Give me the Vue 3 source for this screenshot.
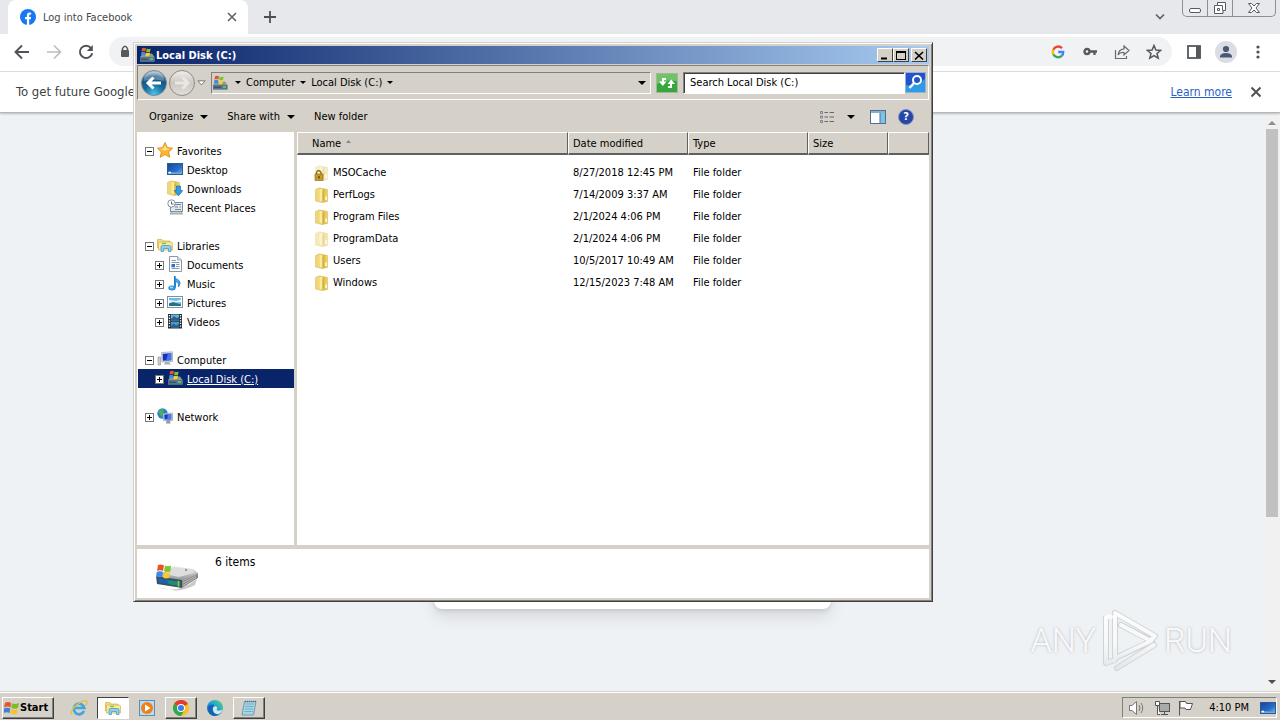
<template>
  <div class="desktop">

    <!-- ICON SPRITES -->
    <svg class="sprites" aria-hidden="true">
      <defs>
        <linearGradient id="g-folder" x1="0" x2="1" y1="0" y2="0">
          <stop offset="0" stop-color="#f8e68c" />
          <stop offset=".5" stop-color="#dfbd45" />
          <stop offset="1" stop-color="#f0d870" />
        </linearGradient>
        <radialGradient id="g-back" cx=".5" cy=".95" r=".9">
          <stop offset="0" stop-color="#48c8f0" />
          <stop offset=".45" stop-color="#176c9e" />
          <stop offset=".8" stop-color="#14507c" />
          <stop offset="1" stop-color="#a9c4d4" />
        </radialGradient>
        <linearGradient id="g-fwd" x1="0" x2="0" y1="0" y2="1">
          <stop offset="0" stop-color="#f0eeeb" />
          <stop offset=".5" stop-color="#cbc8c4" />
          <stop offset="1" stop-color="#e2dfdb" />
        </linearGradient>
        <linearGradient id="g-screen" x1="0" x2="1" y1="0" y2="1">
          <stop offset="0" stop-color="#0f479f" />
          <stop offset=".6" stop-color="#2a6cc4" />
          <stop offset="1" stop-color="#7fc0f0" />
        </linearGradient>
        <linearGradient id="g-drive" x1="0" x2="0" y1="0" y2="1">
          <stop offset="0" stop-color="#f1f1f1" />
          <stop offset="1" stop-color="#8d9192" />
        </linearGradient>
        <linearGradient id="g-edge" x1="0" x2="1" y1="1" y2="0">
          <stop offset="0" stop-color="#0c59a4" />
          <stop offset=".5" stop-color="#1b9de2" />
          <stop offset="1" stop-color="#5fd86a" />
        </linearGradient>
        <linearGradient id="g-mark" x1="0" x2="0" y1="0" y2="1">
          <stop offset="0" stop-color="#fcfdfd" />
          <stop offset=".55" stop-color="#f6f8f9" />
          <stop offset="1" stop-color="#e4e7ea" />
        </linearGradient>
      </defs>

      <symbol id="i-flag" viewBox="0 0 16 16">
        <path d="M1 3Q4 1 7 3L6.500 7.500Q3.500 5.500 0 7.500Z" fill="#e8532a" />
        <path d="M8 3.300Q11 5 15 3L14 8Q10.500 9.500 7.300 7.800Z" fill="#7cba2c" />
        <path d="M0 8.500Q3 6.800 6.300 8.500L5.500 13Q3 11.500-.5 13Z" fill="#3a82d8" />
        <path d="M7.200 9Q10 10.500 13.800 9L13 13.500Q10 15 6.400 13.300Z" fill="#f8c22c" />
      </symbol>

      <symbol id="i-disk" viewBox="0 0 16 16">
        <path d="M1 10L4 6.500H13L15.500 10V14.500H1Z" fill="#8f9a8c" />
        <path d="M1 10H15.500V14.500H1Z" fill="#56758c" />
        <path d="M2 12.300H9" stroke="#2a4a70" />
        <path d="M11 12H14" stroke="#58e050" stroke-width="1.500" />
        <path d="M3 1.300Q5 .3 7 1.300L6.500 4.600Q4.500 3.600 2.500 4.600Z" fill="#e8532a" />
        <path d="M7.700 1.500Q9.500 2.500 11.600 1.500L11 5Q9 5.800 7.200 4.800Z" fill="#7cc82c" />
        <path d="M2.400 5.200Q4.300 4.200 6.300 5.200L5.800 8.400Q4 7.500 2 8.400Z" fill="#3a8ae8" />
        <path d="M7 5.500Q9 6.500 11 5.500L10.400 8.800Q8.500 9.800 6.500 8.700Z" fill="#fbd02c" />
      </symbol>

      <symbol id="i-bigdisk" viewBox="0 0 44 28">
        <path d="M3 24Q22 32 42 16L40 22Q27 29 16 27Z" fill="#c9c9c9" />
        <path d="M2 13L18 3L38 6L43 10L27 18Z" fill="url(#g-drive)" />
        <path d="M18 4L36 6.500L40 9.500L24 14L10 11Z" fill="#dedede" />
        <path d="M27 18L43 10V15L27 25Z" fill="#8b8b8b" />
        <path d="M1 13L27 17V25L2 21Z" fill="#3a5168" />
        <path d="M3 15.500L22 18.500V22.500L4 19.500Z" fill="#1b62b0" />
        <path d="M12 17L22 18.500V22.500L14 21.300Z" fill="#218b72" />
        <path d="M23.500 18V23.500" stroke="#61dc47" stroke-width="2" />
        <path d="M28 20L41 12.500M28 22.500L41 14.500" stroke="#bbb" />
        <circle cx="31" cy="7" r="1.200" fill="#999" />
        <path d="M3 2Q6 1 9 2.500L8 8Q5 6.500 2 8Z" fill="#e8532a" />
        <path d="M10 2.500Q13 4 16 2.500L15.500 8.500Q12 9.500 9 8Z" fill="#7cc82c" />
        <path d="M1.800 9Q5 7.500 8 9L7 14Q4 13 1 14Z" fill="#3a8ae8" />
        <path d="M9 9.300Q12 10.500 15 9.500L14 15Q11 16 8 14.500Z" fill="#fbc82c" />
      </symbol>

      <symbol id="i-folder" viewBox="0 0 16 16">
        <path d="M1.500 2.500L5.500 .8V13L8.500 15.500L1.500 14Z" fill="#efd873" stroke="#d3b54e" stroke-width=".5" />
        <path d="M6 1L13.500 2.500V14.500L8 15.500Z" fill="url(#g-folder)" stroke="#cdae43" stroke-width=".5" />
        <path d="M5.500 1.500V13L8.500 15.200V3Z" fill="#fbeb9d" />
        <path d="M9 3.500V14.500" stroke="#c09a2b" stroke-width=".8" />
        <path d="M12 9.500V13" stroke="#fff" stroke-width="1.400" />
      </symbol>

      <symbol id="i-folder-lock" viewBox="0 0 16 16">
        <use href="#i-folder" opacity=".4" />
        <path d="M2.500 10V7.500Q4.500 3.500 7 7.500V10" fill="none" stroke="#8d762a" stroke-width="1.500" />
        <rect x="1" y="9" width="8" height="6.500" fill="#c79a22" stroke="#8a6712" stroke-width=".6" />
        <path d="M5 11V13.500" stroke="#5b4206" stroke-width="1.300" />
      </symbol>

      <symbol id="i-folder-faint" viewBox="0 0 16 16">
        <use href="#i-folder" opacity=".5" />
      </symbol>

      <symbol id="i-star" viewBox="0 0 16 16">
        <path d="M8 .5L10.300 5.500L15.600 6.200L11.700 9.900L12.800 15.300L8 12.500L3.200 15.300L4.300 9.900L.4 6.200L5.700 5.500Z" fill="#fdb72e" stroke="#df8415" stroke-width=".8" />
        <path d="M8 3L9.500 6.500L13 7L8 8.500L3 7L6.500 6.500Z" fill="#fee18a" />
      </symbol>

      <symbol id="i-desktop" viewBox="0 0 16 16">
        <rect x=".5" y="2.500" width="15" height="11" fill="url(#g-screen)" stroke="#2b5a94" />
        <path d="M1 11L15 12V13H1Z" fill="#74a9df" />
        <path d="M1.500 11.500H4" stroke="#fff" stroke-width="1.500" />
      </symbol>

      <symbol id="i-downloads" viewBox="0 0 16 16">
        <use href="#i-folder" x="-1" />
        <path d="M9.500 6H13.500V10.500H15.800L11.500 15.800L7.200 10.500H9.500Z" fill="#2d9be6" stroke="#1b6db5" stroke-width=".7" />
      </symbol>

      <symbol id="i-recent" viewBox="0 0 16 16">
        <rect x="3.500" y="3.500" width="12" height="9" fill="#e4ebf0" stroke="#7d8f9b" />
        <path d="M3 15L5 12.500H14L15.500 15Z" fill="#c6cdd2" stroke="#7b848a" stroke-width=".7" />
        <path d="M8 5.500H14M8 8H11M12.500 8H14M8 10.500H14" stroke="#6c8797" />
        <circle cx="4.500" cy="4.500" r="3.700" fill="#fff" stroke="#8193a0" />
        <path d="M4.500 2.500V5H6.500" fill="none" stroke="#567" />
      </symbol>

      <symbol id="i-library" viewBox="0 0 16 16">
        <path d="M.5 2.500H5L6 4H13V11H.5Z" fill="#f6df83" stroke="#cfae48" stroke-width=".7" />
        <path d="M1.500 5H14.500L15.500 6V13H1.500Z" fill="#f9ea9c" stroke="#d1b250" stroke-width=".7" />
        <path d="M4 14.500V10Q4 8.500 5.500 8.500H12.500Q14 8.500 14 10V14.500H11.500V11.500H6.500V14.500Z" fill="#8fd0f2" stroke="#4091bb" stroke-width=".7" />
        <path d="M5 6.500H9" stroke="#78bf55" stroke-width="1.300" />
      </symbol>

      <symbol id="i-doc" viewBox="0 0 16 16">
        <path d="M2.500 .5H10.500L14.500 4V15.500H2.500Z" fill="#fdfdfd" stroke="#8696a5" />
        <path d="M10.500 .5V4H14.500" fill="#d4dde5" stroke="#8696a5" stroke-width=".7" />
        <path d="M4.500 4.500H9M4.500 6.500H12.500M9 8.500H12.500M9 10.500H12.500M4.500 12.500H12.500" stroke="#8a9cac" />
        <rect x="4.500" y="8" width="3.500" height="3.300" fill="#2a74c4" />
      </symbol>

      <symbol id="i-music" viewBox="0 0 16 16">
        <path d="M7 1Q8.500 4 12 5.500Q14.500 8 11.500 12Q12.500 7.500 8.500 6.500V12.500" fill="#46aeea" stroke="#1c7cc6" stroke-width=".8" />
        <path d="M7 1H8.500V13H7Z" fill="#1c7cc6" />
        <ellipse cx="5" cy="13" rx="3.700" ry="2.500" fill="#2c92dc" />
        <ellipse cx="4.500" cy="12.500" rx="1.700" ry="1" fill="#9bdcff" />
      </symbol>

      <symbol id="i-picture" viewBox="0 0 16 16">
        <rect x=".5" y="2.500" width="15" height="11" fill="#fff" stroke="#8090a0" />
        <rect x="2" y="4" width="12" height="8" fill="#6ebbe8" />
        <path d="M2 6L9 7L14 5.500V8L2 9Z" fill="#e5f6fa" />
        <path d="M2 9.500L6 8L14 10.500V12H2Z" fill="#257084" />
      </symbol>

      <symbol id="i-video" viewBox="0 0 16 16">
        <rect x="1" y="1" width="14" height="14.500" fill="#252d35" />
        <rect x="4" y="1.500" width="8" height="6.300" fill="#6dafd8" />
        <rect x="4" y="8.700" width="8" height="6.300" fill="#4b99c9" />
        <path d="M4 6L7 3L10 5L12 4V7.800H4ZM4 13L6.500 10.500L9 12.500L12 11V15H4Z" fill="#28618f" />
        <path d="M2.500 2V15M13.500 2V15" stroke="#fff" stroke-width="1.300" stroke-dasharray="1.300 1.300" />
      </symbol>

      <symbol id="i-computer" viewBox="0 0 16 16">
        <path d="M1 6H3.500V14H1Z" fill="#c9ced3" stroke="#878e96" stroke-width=".6" />
        <path d="M4.500 1.500L15.500 .8V10.500L5 11Z" fill="#e1e4e8" stroke="#8b949e" stroke-width=".6" />
        <path d="M5.700 2.700L14.300 2.200V9.200L5.900 9.700Z" fill="#1432bd" />
        <path d="M11 2.500L14.300 2.200V9.200L9 9.500Z" fill="#4670ec" />
        <path d="M8 11H12L14 13.500H7Z" fill="#a8aeb5" />
      </symbol>

      <symbol id="i-network" viewBox="0 0 16 16">
        <circle cx="5.500" cy="5.500" r="5.200" fill="#2b83c8" />
        <path d="M1 4Q4 -.5 7 1.500Q5 4 7 5L4 9Q3 5.500 1 4Z" fill="#49ae62" />
        <path d="M6 5.500L15.500 5V12.500H6.500Z" fill="#dfe3e8" stroke="#89929c" stroke-width=".6" />
        <path d="M7.200 6.600L14.300 6.200V11.500H7.500Z" fill="#1637c6" />
        <path d="M11 6.400L14.300 6.200V11.500H10Z" fill="#4c7af0" />
        <path d="M9.500 12.500H13L13.500 15.500H9Z" fill="#8f979f" />
      </symbol>
    </svg>

    <!-- BROWSER -->
    <main class="browser">
      <header class="tab-strip">
        <div class="tab">
          <svg class="fb" viewBox="0 0 16 16">
            <circle cx="8" cy="8" r="8" fill="#1877f2" />
            <path d="M6.900 16V10.300H5V8H6.900V6.300Q6.900 3.500 9.600 3.500L11.200 3.700V5.600H10.200Q9.200 5.600 9.200 6.600V8H11.100L10.800 10.300H9.200V16Z" fill="#fff" />
          </svg>
          <span class="tab-title">Log into Facebook</span>
          <button class="plain" aria-label="Close tab">
            <svg width="10" height="10" viewBox="0 0 10 10"><path d="M1 1L9 9M9 1L1 9" stroke="#5f6368" stroke-width="1.600" /></svg>
          </button>
        </div>
        <button class="plain new-tab" aria-label="New tab">
          <svg width="14" height="14" viewBox="0 0 14 14"><path d="M7 1V13M1 7H13" stroke="#4c4f53" stroke-width="1.800" /></svg>
        </button>
        <button class="plain tab-search" aria-label="Search tabs">
          <svg width="10" height="8" viewBox="0 0 10 8"><path d="M1 1.500L5 5.500L9 1.500" fill="none" stroke="#5f6368" stroke-width="1.700" /></svg>
        </button>
        <div class="caption">
          <button aria-label="Minimize"><svg width="14" height="16" viewBox="0 0 14 16"><rect x="1.500" y="8.500" width="11" height="4" rx="1.500" fill="#fff" stroke="#555b66" /></svg></button>
          <button aria-label="Restore"><svg width="14" height="16" viewBox="0 0 14 16"><path d="M4.500 2.500H12.500V10.500H10V13.500H1.500V5.500H4.500Z" fill="#fff" stroke="#555b66" /><path d="M4.500 5.500H9.500V10.500M4.500 8.500H6.500V10.500H4.500Z" fill="none" stroke="#555b66" /></svg></button>
          <button class="wide" aria-label="Close"><svg width="14" height="16" viewBox="0 0 14 16"><path d="M1.500 3.500H4.500L7 6L9.500 3.500H12.500L9 8L12.500 12.500H9.500L7 10L4.500 12.500H1.500L5 8Z" fill="#fff" stroke="#555b66" /></svg></button>
        </div>
      </header>

      <nav class="nav-bar">
        <button class="plain tool" aria-label="Back">
          <svg width="16" height="16" viewBox="0 0 16 16"><path d="M15 8H2M8 1.500L1.500 8L8 14.500" fill="none" stroke="#4f5357" stroke-width="1.900" /></svg>
        </button>
        <button class="plain tool" aria-label="Forward">
          <svg width="16" height="16" viewBox="0 0 16 16"><path d="M1 8H14M8 1.500L14.500 8L8 14.500" fill="none" stroke="#bcbec1" stroke-width="1.700" /></svg>
        </button>
        <button class="plain tool" aria-label="Reload">
          <svg width="16" height="16" viewBox="0 0 16 16"><path d="M13 4A6.200 6.200 0 1 0 14.200 9.200" fill="none" stroke="#4f5357" stroke-width="2" /><path d="M14.800 1V7H8.800Z" fill="#4f5357" /></svg>
        </button>
        <div class="omnibox">
          <svg class="lock" width="10" height="13" viewBox="0 0 10 13"><path d="M2.500 6V3.500Q5 -1 7.500 3.500V6" fill="none" stroke="#55595e" stroke-width="1.500" /><rect x="1" y="5" width="8" height="7" rx="1" fill="#55595e" /></svg>
          <input type="text" aria-label="Address">
          <button class="plain tool" aria-label="Google">
            <svg width="14" height="14" viewBox="0 0 14 14" fill="none" stroke-width="2.300">
              <path d="M11 3.200A5.300 5.300 0 0 0 2.300 4.700" stroke="#ea4335" />
              <path d="M2.300 4.700A5.300 5.300 0 0 0 2.300 9.300" stroke="#fbbc05" />
              <path d="M2.300 9.300A5.300 5.300 0 0 0 10.700 10.900" stroke="#34a853" />
              <path d="M10.700 10.900A5 5 0 0 0 12.200 7H7.200" stroke="#4285f4" />
            </svg>
          </button>
          <button class="plain tool" aria-label="Passwords">
            <svg width="14" height="10" viewBox="0 0 14 10" fill="none" stroke="#55595e"><circle cx="4" cy="4.500" r="2.500" stroke-width="2.400" /><path d="M6.500 4.500H14M11.500 4.500V8" stroke-width="2.300" /></svg>
          </button>
          <button class="plain tool" aria-label="Share">
            <svg width="16" height="16" viewBox="0 0 16 16" fill="none" stroke="#686c70" stroke-width="1.200"><path d="M1.500 6V14.500H12.500V12" /><path d="M10 2L15 6.500L10 11V8.500Q6 8 4 11Q4.500 5.500 10 4.800Z" /></svg>
          </button>
          <button class="plain tool" aria-label="Bookmark">
            <svg width="16" height="16" viewBox="0 0 16 16"><path d="M8 1.500L9.900 6L14.700 6.400L11 9.500L12.200 14.200L8 11.600L3.800 14.200L5 9.500L1.300 6.400L6.100 6Z" fill="none" stroke="#55595e" stroke-width="1.500" /></svg>
          </button>
        </div>
        <button class="plain tool" aria-label="Side panel">
          <svg width="14" height="14" viewBox="0 0 14 14"><rect x="1" y="1" width="12" height="12" fill="none" stroke="#55595e" stroke-width="1.800" /><rect x="9" y="1" width="4.500" height="12" fill="#55595e" /></svg>
        </button>
        <button class="plain tool" aria-label="Profile">
          <svg width="22" height="22" viewBox="0 0 22 22"><circle cx="11" cy="11" r="11" fill="#dadde3" /><circle cx="11" cy="8" r="3.100" fill="#4b5878" /><path d="M5 16.500V15Q6 12 11 12Q16 12 17 15V16.500Z" fill="#4b5878" /></svg>
        </button>
        <button class="plain tool" aria-label="Menu">
          <svg width="4" height="14" viewBox="0 0 4 14" fill="#4c5054"><circle cx="2" cy="2" r="1.600" /><circle cx="2" cy="7" r="1.600" /><circle cx="2" cy="12" r="1.600" /></svg>
        </button>
      </nav>

      <div class="info-bar">
        <span class="info-text">To get future Google</span>
        <a href="#">Learn more</a>
        <button class="plain" aria-label="Dismiss">
          <svg width="12" height="12" viewBox="0 0 12 12"><path d="M1.500 1.500L10.500 10.500M10.500 1.500L1.500 10.500" stroke="#4c5054" stroke-width="1.900" /></svg>
        </button>
      </div>

      <div class="page">
        <div class="page-body">
          <div class="login-card"></div>
        </div>
        <div class="scrollbar">
          <svg width="8" height="5" viewBox="0 0 8 5"><path d="M0 5L4 1L8 5Z" fill="#8c8c8c" /></svg>
          <div class="thumb"></div>
          <svg width="8" height="5" viewBox="0 0 8 5"><path d="M0 0L4 4L8 0Z" fill="#505050" /></svg>
        </div>
      </div>

      <!-- WATERMARK -->
      <div class="watermark">
        <span>ANY</span>
        <svg width="58" height="64" viewBox="0 0 58 64" fill="none" stroke-linejoin="round" stroke-linecap="round">
          <path d="M5 10V55L14 52M14 5L54 28L50 32M14 5V50L51 33L20 17M16 60L53 37" stroke="#c3c7cb" stroke-width="6" opacity=".7" />
          <path d="M10 9H5V55L14 52M14 5L54 28L50 32M14 5V50L50 33L20 17M16 60L53 37" stroke="url(#g-mark)" stroke-width="4" />
        </svg>
        <span>RUN</span>
      </div>
    </main>

    <!-- EXPLORER WINDOW -->
    <section class="window">
      <header class="title-bar">
        <svg class="ico"><use href="#i-disk" /></svg>
        <h1>Local Disk (C:)</h1>
        <button class="win-btn" aria-label="Minimize"><svg width="10" height="9" viewBox="0 0 10 9"><path d="M1 7.500H7" stroke="#000" stroke-width="2" /></svg></button>
        <button class="win-btn" aria-label="Maximize"><svg width="10" height="9" viewBox="0 0 10 9"><path d="M1 1H9" stroke="#000" stroke-width="2" /><rect x=".5" y=".5" width="9" height="8" fill="none" stroke="#000" /></svg></button>
        <button class="win-btn close" aria-label="Close"><svg width="10" height="9" viewBox="0 0 10 9"><path d="M1 1L9 8.500M9 1L1 8.500" stroke="#000" stroke-width="1.600" /></svg></button>
      </header>

      <div class="address-row">
        <button class="plain" aria-label="Back">
          <svg width="28" height="28" viewBox="0 0 28 28"><circle cx="14" cy="14" r="12.500" fill="url(#g-back)" stroke="#7d8b94" /><path d="M3.500 12Q4 3 14 3Q24 3 24.500 12Q14 9 3.500 12Z" fill="#fff" opacity=".3" /><path d="M21 14H9M13.500 8.500L8 14L13.500 19.500" fill="none" stroke="#fff" stroke-width="3" /></svg>
        </button>
        <button class="plain" aria-label="Forward">
          <svg width="28" height="28" viewBox="0 0 28 28"><circle cx="14" cy="14" r="12.500" fill="url(#g-fwd)" stroke="#8e8b87" /><path d="M7 14H19M14.500 8.500L20 14L14.500 19.500" fill="none" stroke="#e9e7e4" stroke-width="3" /></svg>
        </button>
        <button class="plain history" aria-label="Recent pages">
          <svg width="9" height="6" viewBox="0 0 9 6"><path d="M.8 .8H8.200L4.500 5Z" fill="#fff" stroke="#7d7a76" /></svg>
        </button>
        <div class="address">
          <svg class="ico crumb-ico"><use href="#i-disk" /></svg>
          <i class="arrow small"></i>
          <button class="plain crumb">Computer</button>
          <i class="arrow small"></i>
          <button class="plain crumb">Local Disk (C:)</button>
          <i class="arrow small"></i>
          <button class="plain drop" aria-label="Previous locations"><i class="arrow"></i></button>
        </div>
        <button class="plain refresh" aria-label="Refresh">
          <svg width="22" height="20" viewBox="0 0 22 20"><rect x=".5" y=".5" width="21" height="19" fill="#38a63c" stroke="#9fb99a" /><path d="M1 1H21V8Q10 6 1 11Z" fill="#6fc367" /><path d="M10 6H7V9.500M12 14H15V10.500" fill="none" stroke="#fff" stroke-width="2" /><path d="M3 8.500H10.500L6.800 13ZM11.500 11H19L15.200 6.500Z" fill="#fff" /></svg>
        </button>
        <input v-model="search" class="search" type="text" aria-label="Search">
        <button class="plain" aria-label="Search">
          <svg width="21" height="21" viewBox="0 0 21 21"><rect x=".5" y=".5" width="20" height="20" fill="#2452c8" stroke="#97b1d4" /><path d="M1 20V13Q11 14 20 7V20Z" fill="#2f9be6" /><circle cx="12" cy="8" r="4" fill="none" stroke="#fff" stroke-width="2" /><path d="M9 11L4.500 16" stroke="#fff" stroke-width="2.400" /></svg>
        </button>
      </div>

      <div class="command-bar">
        <button class="plain">Organize <i class="arrow"></i></button>
        <button class="plain">Share with <i class="arrow"></i></button>
        <button class="plain">New folder</button>
        <button class="plain views" aria-label="Change view">
          <svg width="16" height="14" viewBox="0 0 16 14" fill="none"><path d="M1.500 1.500H3.500V3.500H1.500ZM1.500 6H3.500V8H1.500ZM1.500 10.500H3.500V12.500H1.500Z" stroke="#7d8090" /><path d="M5.500 2.500H9M10.500 2.500H15M5.500 7H9M10.500 7H15M5.500 11.500H9M10.500 11.500H15" stroke="#666" /></svg>
          <i class="arrow"></i>
        </button>
        <button class="plain" aria-label="Preview pane">
          <svg width="16" height="14" viewBox="0 0 16 14"><rect x=".5" y=".5" width="15" height="13" fill="#fff" stroke="#4a7299" /><path d="M1 2H15" stroke="#8ab0d0" stroke-width="2" /><rect x="10" y="3" width="5" height="10" fill="#7cc4e6" /><path d="M10 3V13" stroke="#4a7299" /></svg>
        </button>
        <button class="plain help" aria-label="Help">?</button>
      </div>

      <div class="panes">
        <ul class="tree">
          <li
            v-for="(node, i) in tree"
            :key="i"
            :class="{ child: node.level, group: node.gap, selected: node.selected }"
          >
            <button v-if="node.sign" class="expander" :aria-label="'Toggle ' + node.label">
              <svg width="9" height="9" viewBox="0 0 9 9">
                <rect x=".5" y=".5" width="8" height="8" fill="#fff" stroke="#777" />
                <path :d="node.sign === '+' ? 'M2 4.500H7M4.500 2V7' : 'M2 4.500H7'" stroke="#000" />
              </svg>
            </button>
            <span v-else class="expander"></span>
            <svg class="ico"><use :href="'#i-' + node.icon" /></svg>
            <a href="#">{{ node.label }}</a>
          </li>
        </ul>

        <div class="files">
          <table>
            <colgroup>
              <col class="c-name"><col class="c-date"><col class="c-date"><col class="c-size"><col>
            </colgroup>
            <thead>
              <tr>
                <th class="first">Name <svg width="5" height="3" viewBox="0 0 5 3"><path d="M0 3L2.500 0L5 3Z" fill="#8a857e" /></svg></th>
                <th>Date modified</th>
                <th>Type</th>
                <th>Size</th>
                <th></th>
              </tr>
            </thead>
            <tbody>
              <tr v-for="file in files" :key="file.name">
                <td class="first"><span class="file"><svg class="ico"><use :href="'#i-' + file.icon" /></svg>{{ file.name }}</span></td>
                <td>{{ file.date }}</td>
                <td>File folder</td>
                <td></td>
                <td></td>
              </tr>
            </tbody>
          </table>
        </div>
      </div>

      <footer class="details">
        <svg width="44" height="28"><use href="#i-bigdisk" /></svg>
        <span>{{ files.length }} items</span>
      </footer>
    </section>

    <!-- TASKBAR -->
    <footer class="taskbar">
      <button class="start"><svg class="ico"><use href="#i-flag" /></svg>Start</button>
      <button class="task ie" aria-label="Internet Explorer">
        <svg width="18" height="18" viewBox="0 0 18 18" fill="none"><path d="M14 12A5.300 5.300 0 1 1 14.300 9H4.500" stroke="#3fa7dd" stroke-width="2.700" /><path d="M2 16Q-1 12 8 5Q15 0 17 2.500Q17.500 4 15.500 6.500" stroke="#edc03a" stroke-width="1.400" /></svg>
      </button>
      <button class="task active" aria-label="Windows Explorer"><svg class="ico"><use href="#i-library" /></svg></button>
      <button class="task" aria-label="Media Player">
        <svg width="16" height="16" viewBox="0 0 16 16"><rect x=".5" y=".5" width="15" height="15" fill="#b9dcf2" stroke="#5d8db5" /><circle cx="8" cy="8" r="6" fill="#ef8019" /><path d="M6 4.500L11.500 8L6 11.500Z" fill="#fff" /></svg>
      </button>
      <button class="task raised" aria-label="Chrome">
        <svg width="16" height="16" viewBox="0 0 16 16"><circle cx="8" cy="8" r="8" fill="#fbc116" /><path d="M8 8L1.070 4A8 8 0 0 1 14.930 4Z" fill="#e33b2e" /><path d="M8 8L1.070 4A8 8 0 0 0 8 16L11.500 10Z" fill="#2da94f" /><circle cx="8" cy="8" r="4" fill="#fff" /><circle cx="8" cy="8" r="3" fill="#3b7ded" /></svg>
      </button>
      <button class="task" aria-label="Edge">
        <svg width="16" height="16" viewBox="0 0 16 16"><circle cx="8" cy="8" r="8" fill="url(#g-edge)" /><path d="M6 8Q7 5.500 9.500 6.500Q11 8 9.500 10Q12 11.500 15.500 9.500Q14 14 10 14.500Q5.500 13 6 8Z" fill="#d4e8ea" /><path d="M1 7Q4 3.500 7.500 5Q4 8 6 12Q8 15 12 14Q9 16.500 5.500 15.500Q1 13 1 7Z" fill="#1463b3" /></svg>
      </button>
      <button class="task raised" aria-label="Notepad">
        <svg width="16" height="16" viewBox="0 0 16 16"><path d="M3.500 1.500H15L12.500 15H1Z" fill="#a5d8e6" stroke="#5d8e9e" stroke-width=".8" /><path d="M4.500 4H13M4.200 6.500H12.700M3.700 9H12.200M3.300 11.500H11.800" stroke="#6aa5b8" stroke-width=".8" /><path d="M4 1.500H15" stroke="#667" stroke-width="1.500" stroke-dasharray="1 1" /></svg>
      </button>

      <div class="tray">
        <svg width="18" height="16" viewBox="0 0 18 16" fill="none" stroke="#777"><path d="M1.500 5.500H4L8.500 1.500V14.500L4 10.500H1.500Z" fill="#fff" /><path d="M11 5Q13 8 11 11M13 3Q16.500 8 13 13" /></svg>
        <svg width="16" height="16" viewBox="0 0 16 16" fill="none" stroke="#555"><rect x="5.500" y="3.500" width="10" height="8" fill="#aaa" /><path d="M7 14.500H14M10.500 12V14" /><path d="M1.500 1.500H5.500V5.500H1.500ZM3.500 5.500V14.500H6" fill="#fff" /></svg>
        <svg width="16" height="16" viewBox="0 0 16 16" fill="#fff" stroke="#555"><path d="M1.500 1V15.500M2 1.500H7.500L8.500 3.500H14.500L12.500 9.500H8L7 8H2Z" /></svg>
        <time>4:10 PM</time>
        <svg class="ico"><use href="#i-desktop" /></svg>
      </div>
    </footer>
  </div>
</template>

<script setup>
import { ref } from 'vue'

const search = ref('Search Local Disk (C:)')

const tree = [
  { label: 'Favorites', icon: 'star', sign: '-' },
  { label: 'Desktop', icon: 'desktop', level: 1 },
  { label: 'Downloads', icon: 'downloads', level: 1 },
  { label: 'Recent Places', icon: 'recent', level: 1 },
  { label: 'Libraries', icon: 'library', sign: '-', gap: true },
  { label: 'Documents', icon: 'doc', sign: '+', level: 1 },
  { label: 'Music', icon: 'music', sign: '+', level: 1 },
  { label: 'Pictures', icon: 'picture', sign: '+', level: 1 },
  { label: 'Videos', icon: 'video', sign: '+', level: 1 },
  { label: 'Computer', icon: 'computer', sign: '-', gap: true },
  { label: 'Local Disk (C:)', icon: 'disk', sign: '+', level: 1, selected: true },
  { label: 'Network', icon: 'network', sign: '+', gap: true }
]

const files = [
  { name: 'MSOCache', date: '8/27/2018 12:45 PM', icon: 'folder-lock' },
  { name: 'PerfLogs', date: '7/14/2009 3:37 AM', icon: 'folder' },
  { name: 'Program Files', date: '2/1/2024 4:06 PM', icon: 'folder' },
  { name: 'ProgramData', date: '2/1/2024 4:06 PM', icon: 'folder-faint' },
  { name: 'Users', date: '10/5/2017 10:49 AM', icon: 'folder' },
  { name: 'Windows', date: '12/15/2023 7:48 AM', icon: 'folder' }
]
</script>

<style>
body {
  margin: 0;
  overflow: hidden;
}
</style>

<style scoped>
.desktop {
  --face: #d5d0c8;
  --font: Tahoma, "DejaVu Sans Condensed", "DejaVu Sans", sans-serif;
  position: relative;
  display: flex;
  flex-direction: column;
  height: 100vh;
  font: 11px/14px var(--font);
  color: #000;
}

.desktop * {
  box-sizing: border-box;
}

.sprites {
  position: absolute;
  width: 0;
  height: 0;
}

button,
input {
  font: inherit;
  color: inherit;
}

.plain {
  display: inline-flex;
  align-items: center;
  justify-content: center;
  padding: 0;
  border: 0;
  background: none;
}

svg {
  flex: none;
}

.ico {
  width: 16px;
  height: 16px;
}

.arrow {
  width: 0;
  border: 4px solid transparent;
  border-top-color: #000;
  border-bottom: 0;
}

.arrow.small {
  border-width: 3px;
  border-bottom: 0;
}

/* BROWSER */
.browser {
  position: relative;
  display: flex;
  flex: 1;
  flex-direction: column;
  min-height: 0;
  background: #fff;
}

.tab-strip {
  display: flex;
  height: 34px;
  padding: 0 4px 0 8px;
  background: #e6e8eb;
}

.tab {
  display: flex;
  align-items: center;
  width: 240px;
  padding: 0 11px 0 12px;
  border-radius: 8px 8px 0 0;
  background: #fff;
  color: #45494d;
}

.fb {
  width: 16px;
  height: 16px;
  margin-right: 7px;
}

.tab-title {
  flex: 1;
  padding-top: 2px;
}

.new-tab {
  width: 44px;
}

.tab-search {
  width: 20px;
  margin-left: auto;
}

.caption {
  display: flex;
  height: 17px;
  margin-left: 12px;
  border: 1px solid #8a8f98;
  border-top: 0;
  border-radius: 0 0 5px 5px;
}

.caption button {
  display: flex;
  justify-content: center;
  width: 25px;
  padding: 0;
  border: 0;
  border-right: 1px solid #8a8f98;
  background: none;
}

.caption .wide {
  width: 42px;
  border: 0;
}

.nav-bar {
  display: flex;
  align-items: center;
  height: 38px;
  padding: 0 6px 2px;
  border-bottom: 1px solid #dcdee0;
}

.tool {
  width: 32px;
  height: 29px;
}

.omnibox {
  display: flex;
  flex: 1;
  align-items: center;
  height: 29px;
  margin: 0 6px 0 7px;
  padding: 0 2px 0 11px;
  border-radius: 15px;
  background: #f0f2f4;
}

.omnibox input {
  flex: 1;
  min-width: 0;
  border: 0;
  background: none;
}

.info-bar {
  display: flex;
  align-items: center;
  height: 41px;
  padding: 0 18px 0 16px;
  border-bottom: 1px solid #b4b7b9;
  box-shadow: 0 1px 2px #b9bcbf;
  font-size: 12px;
  color: #3c4043;
  z-index: 1;
}

.info-text {
  flex: 1;
  font-size: 13px;
}

.info-bar a {
  margin-right: 18px;
  color: #2a5fc4;
}

.page {
  display: flex;
  flex: 1;
  min-height: 0;
  border-bottom: 1px solid #fff;
  background: #eff2f5;
}

.page-body {
  flex: 1;
}

.login-card {
  width: 397px;
  height: 376px;
  margin: 120px auto 0;
  border-radius: 8px;
  background: #fff;
  box-shadow: 0 2px 4px rgba(0, 0, 0, 0.1), 0 8px 16px rgba(0, 0, 0, 0.1);
}

.scrollbar {
  display: flex;
  flex-direction: column;
  align-items: center;
  width: 15px;
  padding: 7px 2px 6px 0;
  background: #f1f1f1;
}

.thumb {
  width: 12px;
  height: 388px;
  margin: 4px 0 auto;
  background: #c1c1c1;
}

.watermark {
  position: absolute;
  right: 48px;
  bottom: 20px;
  display: flex;
  align-items: center;
  gap: 5px;
  font: 300 34px/64px Roboto, sans-serif;
  color: #f9fafb;
  text-shadow: 0 0 3px #b0b4b8;
  z-index: 1;
}

/* EXPLORER WINDOW */
.window {
  position: absolute;
  left: 133px;
  top: 42px;
  display: flex;
  flex-direction: column;
  width: 800px;
  height: 560px;
  padding: 2px;
  border: 1px solid var(--face);
  border-right-color: #404040;
  border-bottom-color: #404040;
  background: var(--face);
  box-shadow: inset 1px 1px #fff, inset -1px -1px #808080;
  z-index: 2;
}

.title-bar {
  display: flex;
  align-items: center;
  height: 18px;
  margin: 1px;
  padding: 0 2px;
  background: linear-gradient(to right, #0a246a, #a6caf0);
}

.title-bar h1 {
  flex: 1;
  margin: 0 0 0 1px;
  padding-top: 1px;
  font-size: 11px;
  font-weight: bold;
  color: #fff;
}

.win-btn {
  display: flex;
  align-items: center;
  justify-content: center;
  width: 16px;
  height: 14px;
  padding: 0;
  border: 1px solid #fff;
  border-right-color: #404040;
  border-bottom-color: #404040;
  background: var(--face);
}

.win-btn.close {
  margin-left: 2px;
}

.address-row {
  display: flex;
  align-items: center;
  height: 35px;
  margin: 0 1px;
  padding: 1px 2px;
  border: 1px solid #808080;
  border-right-color: #fff;
  border-bottom-color: #fff;
}

.history {
  margin: 0 5px 0 1px;
}

.address {
  display: flex;
  flex: 1;
  align-items: center;
  gap: 5px;
  height: 22px;
  border: 1px solid #808080;
  border-right-color: #fff;
  border-bottom-color: #fff;
}

.crumb-ico {
  margin-right: 2px;
}

.drop {
  margin: 0 4px 0 auto;
}

.refresh {
  margin: 0 5px;
}

.search {
  width: 222px;
  height: 22px;
  padding: 0 6px;
  border: 1px solid #808080;
  border-right-color: #fff;
  border-bottom-color: #fff;
  box-shadow: inset 1px 1px #404040;
  background: #fff;
}

.command-bar {
  display: flex;
  align-items: center;
  gap: 19px;
  height: 32px;
  padding: 1px 16px 0 13px;
}

.command-bar .plain {
  gap: 7px;
}

.command-bar .views {
  gap: 12px;
  margin-left: auto;
}

.command-bar .help {
  width: 16px;
  height: 16px;
  margin-left: -7px;
  border: 1px solid #8194c4;
  border-radius: 50%;
  background: #2747a8;
  font-weight: bold;
  color: #fff;
}

.command-bar .views + .plain {
  margin-left: -4px;
}

.panes {
  display: flex;
  flex: 1;
  min-height: 0;
  margin: 0 1px;
}

.tree {
  width: 157px;
  margin: 0;
  padding: 9px 0 0 1px;
  background: #fff;
  list-style: none;
}

.tree li {
  display: flex;
  align-items: center;
  height: 19px;
  padding-left: 7px;
}

.tree .child {
  padding-left: 17px;
}

.tree .group {
  margin-top: 19px;
}

.tree .selected {
  background: #0a246a;
  color: #fff;
}

.tree .expander {
  display: flex;
  width: 9px;
  padding: 2px 0 0;
  border: 0;
  background: none;
}

.tree .ico {
  margin: 0 4px 2px 3px;
}

.tree a {
  padding-top: 2px;
  color: inherit;
  text-decoration: none;
}

.tree .selected a {
  text-decoration: underline;
}

.files {
  flex: 1;
  margin-left: 3px;
  background: #fff;
}

table {
  width: 100%;
  border-collapse: separate;
  border-spacing: 0;
  table-layout: fixed;
}

.c-name {
  width: 271px;
}

.c-date {
  width: 120px;
}

.c-size {
  width: 80px;
}

th {
  height: 23px;
  padding: 2px 4px 0;
  border: 1px solid #fff;
  border-right-color: #606060;
  border-bottom: 2px solid #606060;
  background: var(--face);
  font-weight: normal;
  text-align: left;
}

th.first {
  padding-left: 14px;
}

th svg {
  margin: 0 0 4px 2px;
}

tbody::before {
  content: "";
  display: block;
  height: 6px;
}

td {
  height: 22px;
  padding: 2px 5px 0;
}

td.first {
  padding: 1px 0 0 17px;
}

.file {
  display: flex;
  align-items: center;
  gap: 3px;
}

.details {
  display: flex;
  height: 49px;
  margin: 4px 1px 1px;
  padding: 6px 18px 0;
  background: #fff;
  font-size: 12px;
}

.details svg {
  margin: 8px 16px 0 0;
}

/* TASKBAR */
.taskbar {
  display: flex;
  align-items: center;
  height: 28px;
  padding: 2px 3px 0 2px;
  border-top: 1px solid #fff;
  background: var(--face);
  box-shadow: 0 -1px var(--face);
  z-index: 3;
}

.start,
.task {
  display: flex;
  align-items: center;
  justify-content: center;
  height: 22px;
  padding: 0;
  border: 0;
  background: none;
}

.start,
.raised {
  border: 1px solid #fff;
  border-right-color: #404040;
  border-bottom-color: #404040;
  box-shadow: inset -1px -1px #808080;
}

.start {
  justify-content: flex-start;
  width: 52px;
  padding-left: 1px;
  font-weight: bold;
}

.task {
  width: 32px;
  margin-left: 2px;
}

.task.ie {
  margin-left: 9px;
}

.task.active {
  border: 1px solid #404040;
  border-right-color: #fff;
  border-bottom-color: #fff;
  background: #fff;
}

.tray {
  display: flex;
  align-items: center;
  gap: 8px;
  height: 21px;
  margin-left: auto;
  padding: 0 0 0 5px;
  border: 1px solid #808080;
  border-right-color: #fff;
  border-bottom-color: #fff;
}

.tray time {
  margin: 0 3px 0 7px;
}
</style>
